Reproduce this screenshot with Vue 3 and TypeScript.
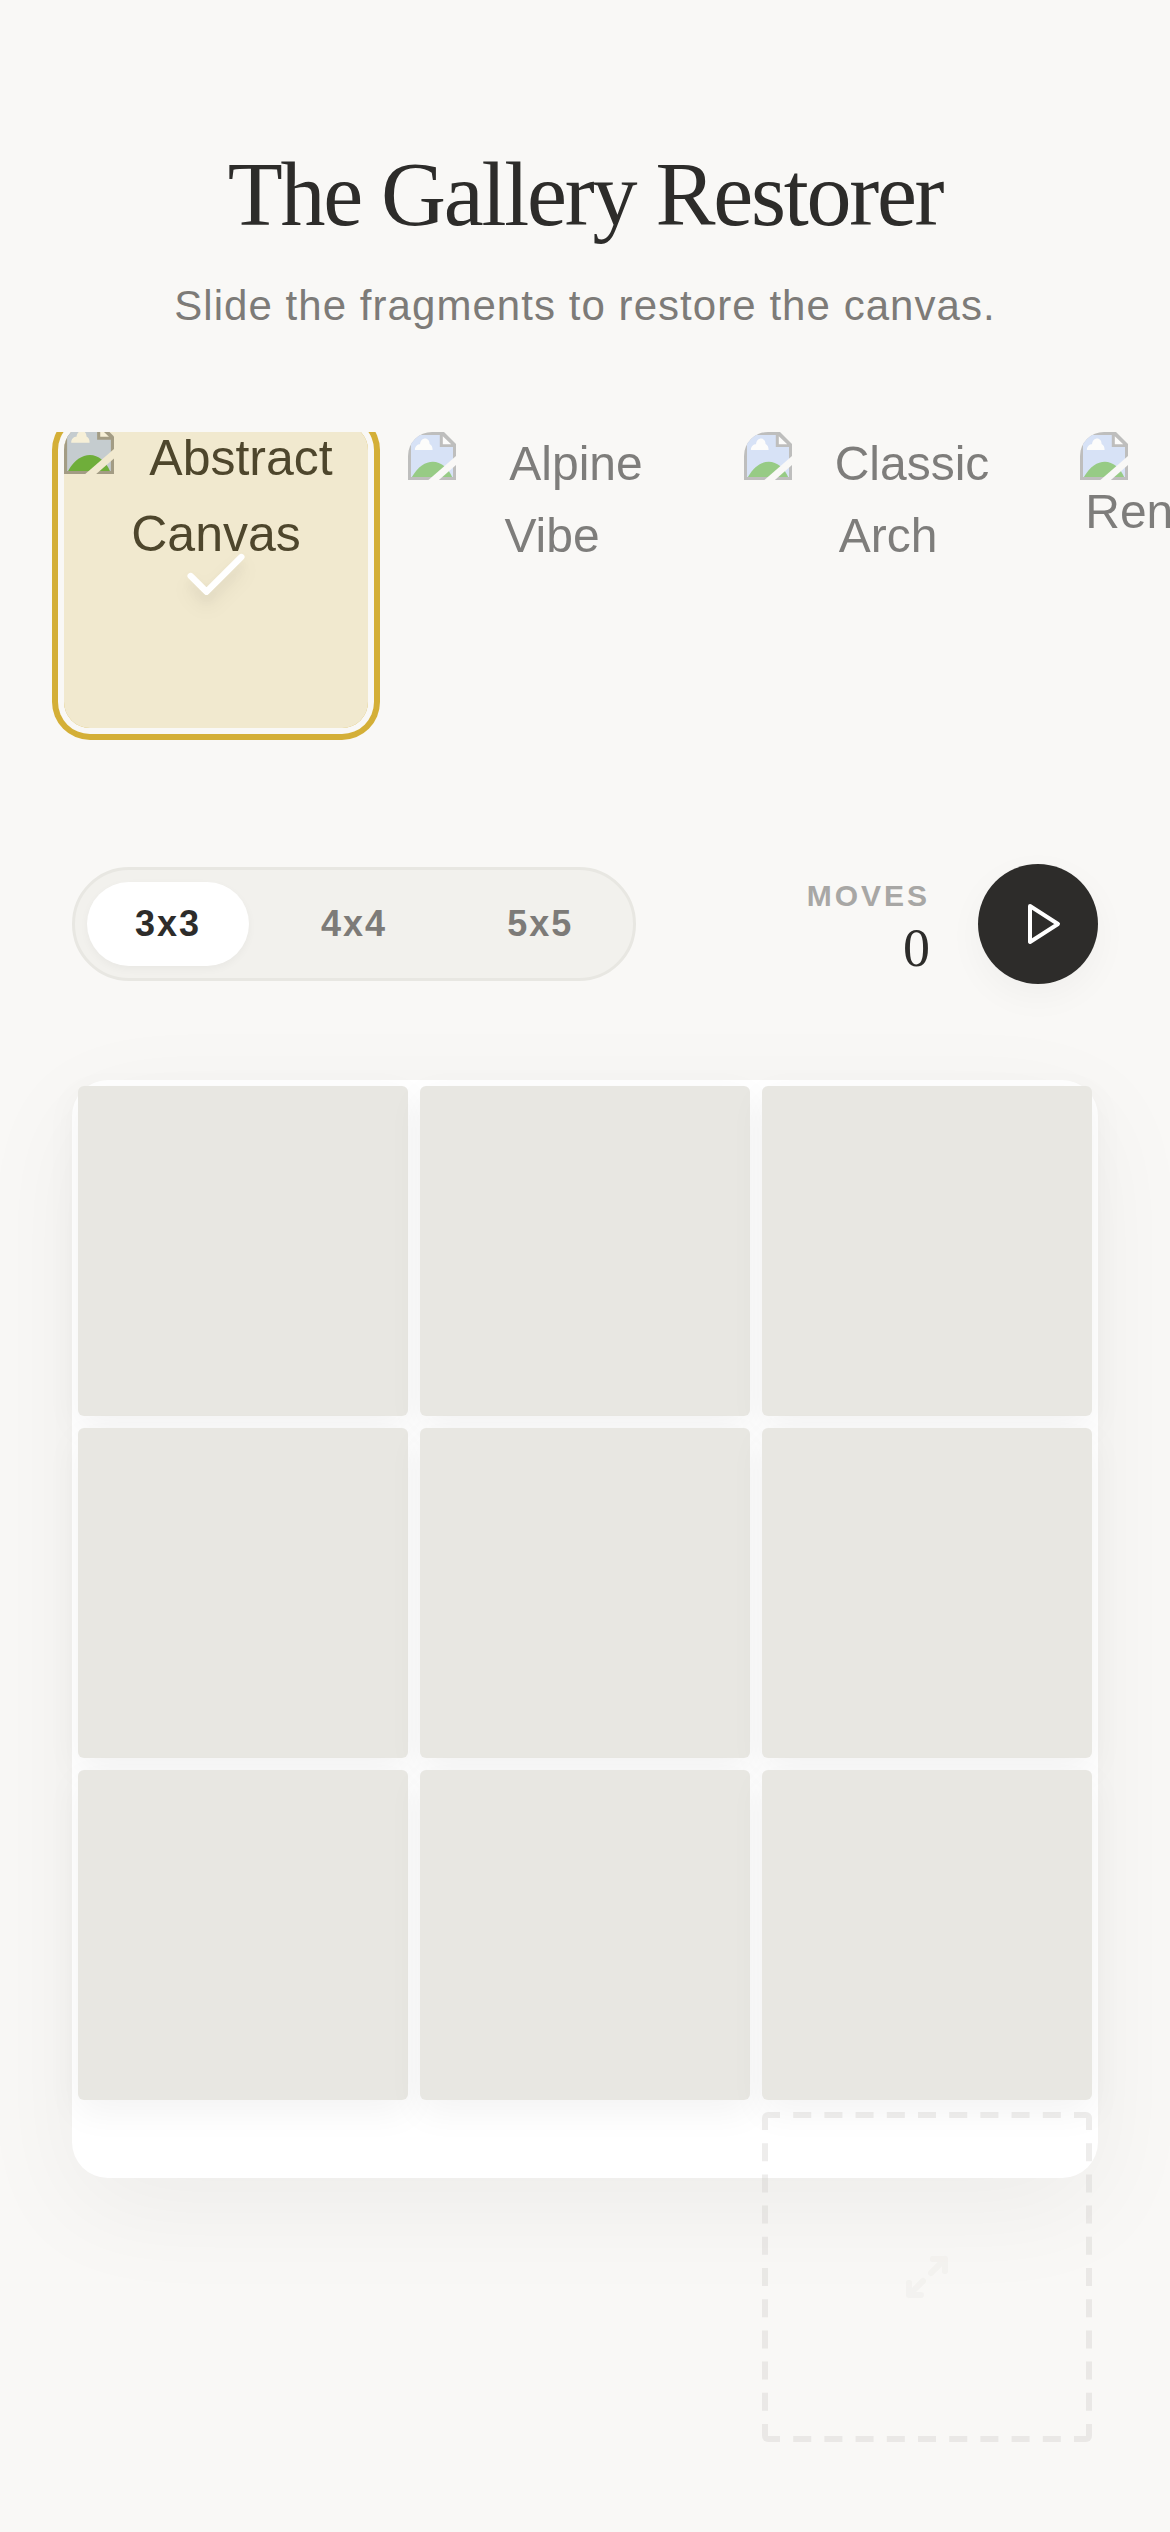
<script setup lang="ts">
import { ref } from 'vue'

interface Artwork {
  id: string
  title: string
}

const artworks: Artwork[] = [
  { id: 'abstract', title: 'Abstract Canvas' },
  { id: 'alpine', title: 'Alpine Vibe' },
  { id: 'classic', title: 'Classic Arch' },
  { id: 'renaissance', title: 'Renaissance' },
]
const sizes: number[] = [3, 4, 5]

const selected = ref<string>('abstract')
const size = ref<number>(3)
const moves = ref<number>(0)
</script>

<template>
  <main class="page">
    <header class="intro">
      <h1>The Gallery Restorer</h1>
      <p>Slide the fragments to restore the canvas.</p>
    </header>

    <section class="picker" aria-label="Artworks">
      <button
        v-for="art in artworks"
        :key="art.id"
        type="button"
        class="thumb"
        :class="{ active: art.id === selected }"
        @click="selected = art.id"
      >
        <span class="alt">
          <svg class="broken" viewBox="0 0 16 16" aria-hidden="true">
            <path d="M0 0H12L16 4V16H0Z" fill="#989898" />
            <path d="M1 1H10.600V5H15V15H1Z" fill="#c2d4f6" />
            <path d="M11.600 1.400L14.400 4.100H11.600Z" fill="#fff" />
            <path d="M2.300 6C2.300 4.700 3.200 4.100 4 4.100C4.100 2.900 4.900 2.200 5.700 2.200C6.600 2.200 7.200 3 7.200 4C7.900 4.300 8.200 5 8.200 6Z" fill="#fff" />
            <path d="M1.300 15C3.300 11.500 5.800 9.900 8.300 9.900C11 9.900 13.400 12 14.700 15Z" fill="#57ae3b" />
            <path class="cut" d="M16 8V11L10.300 16H6.800Z" />
          </svg>
          {{ art.title }}
        </span>
        <span v-if="art.id === selected" class="overlay">
          <svg class="check" viewBox="0 0 24 24" aria-hidden="true">
            <path d="M20 6 9 17l-5-5" />
          </svg>
        </span>
      </button>
    </section>

    <section class="controls">
      <div class="sizes" role="group" aria-label="Grid size">
        <button
          v-for="n in sizes"
          :key="n"
          type="button"
          :class="{ active: n === size }"
          @click="size = n"
        >{{ n }}x{{ n }}</button>
      </div>
      <div class="status">
        <div class="moves">
          <span class="label">MOVES</span>
          <span class="count">{{ moves }}</span>
        </div>
        <button type="button" class="play" aria-label="Start">
          <svg viewBox="0 0 24 24" aria-hidden="true">
            <polygon points="5 3 19 12 5 21 5 3" />
          </svg>
        </button>
      </div>
    </section>

    <section class="board" aria-label="Puzzle board">
      <button v-for="n in 9" :key="n" type="button" class="tile" :aria-label="`Fragment ${n}`"></button>
      <div class="empty">
        <svg class="dashes" viewBox="0 0 1650 1650" aria-hidden="true">
          <path d="M0 15H1650M0 1635H1650M15 0V1650M1635 0V1650" />
        </svg>
        <svg class="expand" viewBox="0 0 24 24" aria-hidden="true">
          <path d="M15 3h6v6M9 21H3v-6M21 3l-7 7M3 21l7-7" />
        </svg>
      </div>
    </section>
  </main>
</template>

<style>
body {
  margin: 0;
  background: #f9f8f6;
}
</style>

<style scoped>
.page {
  min-height: 100vh;
  box-sizing: border-box;
  padding: 144px 0 354px;
  overflow: hidden;
  background: #f9f8f6;
  color: #2d2c2a;
  font-family: "Liberation Sans", Arial, sans-serif;
}
button {
  margin: 0;
  padding: 0;
  border: 0;
  background: none;
  color: inherit;
  font: inherit;
  cursor: pointer;
}
svg {
  display: block;
  fill: none;
}
.intro {
  padding: 0 72px;
  text-align: center;
}
h1 {
  margin: 0 0 30px;
  font: 400 90px/102px "Liberation Serif", "Times New Roman", serif;
  letter-spacing: -0.025em;
}
.intro p {
  margin: 0;
  color: #7d7b78;
  font-size: 42px;
  line-height: 60px;
  letter-spacing: 0.025em;
}
.picker {
  display: flex;
  align-items: flex-start;
  gap: 48px;
  margin-top: 96px;
  padding: 0 72px 48px;
  overflow-x: auto;
  overflow-y: hidden;
  scrollbar-width: none;
}
.thumb {
  position: relative;
  flex: none;
  width: 288px;
  height: 288px;
  border-radius: 24px;
  overflow: hidden;
  opacity: 0.6;
  font-size: 48px;
  line-height: 72px;
}
.thumb.active {
  width: 304px;
  height: 304px;
  margin: -8px;
  border-radius: 26px;
  box-shadow: 0 0 0 6px #f9f8f6, 0 0 0 12px #d4af37;
  opacity: 1;
  font-size: 50px;
  line-height: 76px;
}
.alt {
  display: block;
  height: calc(100% + 4px);
  margin-top: -4px;
  text-align: center;
}
.broken {
  float: left;
  width: 1em;
  height: 1em;
  margin: 4px 0 -4px;
}
.broken .cut {
  fill: #f9f8f6;
}
.overlay {
  position: absolute;
  inset: 0;
  display: flex;
  align-items: center;
  justify-content: center;
  background: rgba(212, 175, 55, 0.2);
}
.check {
  width: 76px;
  height: 76px;
  stroke: #fff;
  stroke-width: 2;
  stroke-linecap: round;
  stroke-linejoin: round;
  filter: drop-shadow(0 12px 9px rgba(0, 0, 0, 0.07)) drop-shadow(0 6px 6px rgba(0, 0, 0, 0.06));
}
.controls {
  display: flex;
  align-items: center;
  justify-content: space-between;
  margin-top: 96px;
  padding: 0 72px;
}
.sizes {
  display: flex;
  gap: 24px;
  padding: 12px;
  border: 3px solid #e8e7e2;
  border-radius: 57px;
  background: #f2f1ed;
}
.sizes button {
  padding: 18px 48px;
  border-radius: 42px;
  color: #7d7b78;
  font-size: 36px;
  font-weight: 700;
  line-height: 48px;
  letter-spacing: 2px;
}
.sizes button.active {
  background: #fff;
  color: #2d2c2a;
  box-shadow: 0 3px 9px rgba(0, 0, 0, 0.04);
}
.status {
  display: flex;
  align-items: center;
  gap: 48px;
}
.moves {
  display: flex;
  flex-direction: column;
  align-items: flex-end;
  gap: 3px;
}
.label {
  color: #a8a7a5;
  font-size: 30px;
  font-weight: 700;
  line-height: 45px;
  letter-spacing: 0.1em;
}
.count {
  font: 400 54px/54px "Liberation Serif", "Times New Roman", serif;
}
.play {
  display: flex;
  align-items: center;
  justify-content: center;
  width: 120px;
  height: 120px;
  border-radius: 50%;
  background: #2d2c2a;
  box-shadow: 0 12px 36px rgba(0, 0, 0, 0.04);
}
.play svg {
  width: 48px;
  height: 48px;
  margin-left: 12px;
  stroke: #fff;
  stroke-width: 2;
  stroke-linecap: round;
  stroke-linejoin: round;
}
.board {
  display: grid;
  grid-template-columns: repeat(3, 1fr);
  align-content: start;
  gap: 12px;
  box-sizing: border-box;
  aspect-ratio: 171 / 183;
  min-height: 0;
  margin: 96px 72px 0;
  padding: 6px;
  border-radius: 36px;
  background: #fff;
  box-shadow: 0 30px 108px rgba(0, 0, 0, 0.05);
}
.tile,
.empty {
  box-sizing: border-box;
  aspect-ratio: 1;
  border-radius: 6px;
}
.tile {
  background: #e8e7e2;
  box-shadow: 0 12px 36px rgba(0, 0, 0, 0.05);
}
.empty {
  position: relative;
  grid-column: 3;
  display: flex;
  align-items: center;
  justify-content: center;
  overflow: hidden;
}
.dashes {
  position: absolute;
  inset: 0;
  width: 100%;
  height: 100%;
  stroke: rgba(208, 206, 202, 0.36);
  stroke-width: 30;
  stroke-dasharray: 90 66;
}
.expand {
  width: 48px;
  height: 48px;
  stroke: #d0cec6;
  stroke-width: 3;
  stroke-linecap: round;
  stroke-linejoin: round;
  opacity: 0.12;
}
</style>
